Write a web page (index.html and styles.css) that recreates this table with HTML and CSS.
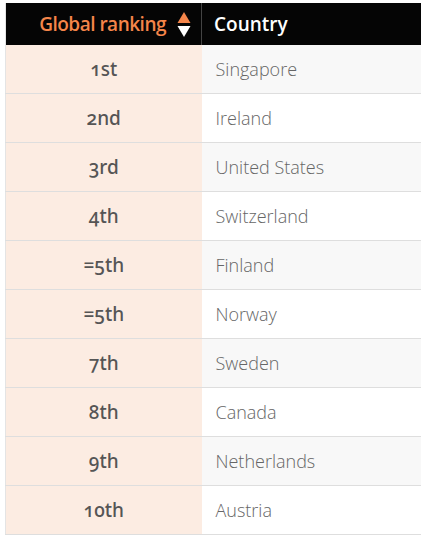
FILE: index.html
```html
<!DOCTYPE html>
<html>
<head>
<meta charset="utf-8">
<link rel="stylesheet" href="styles.css">
</head>
<body>
<div class="wrap">
<table class="rank">
  <thead>
    <tr>
      <th class="c1"><span class="hlabel">Global ranking</span><span class="sort"><svg width="14" height="27" viewBox="0 0 14 27"><path d="M7 1 L13.5 12 L0.5 12 Z" fill="#f5854a"/><path d="M0.5 15 L13.5 15 L7 26 Z" fill="#ffffff"/></svg></span></th>
      <th class="c2">Country</th>
    </tr>
  </thead>
  <tbody>
    <tr><td class="c1"><span class="num">1st</span></td><td class="c2">Singapore</td></tr>
    <tr><td class="c1"><span class="num">2nd</span></td><td class="c2">Ireland</td></tr>
    <tr><td class="c1"><span class="num">3rd</span></td><td class="c2">United States</td></tr>
    <tr><td class="c1"><span class="num">4th</span></td><td class="c2">Switzerland</td></tr>
    <tr><td class="c1"><span class="num">=5th</span></td><td class="c2">Finland</td></tr>
    <tr><td class="c1"><span class="num">=5th</span></td><td class="c2">Norway</td></tr>
    <tr><td class="c1"><span class="num">7th</span></td><td class="c2">Sweden</td></tr>
    <tr><td class="c1"><span class="num">8th</span></td><td class="c2">Canada</td></tr>
    <tr><td class="c1"><span class="num">9th</span></td><td class="c2">Netherlands</td></tr>
    <tr><td class="c1"><span class="num">10th</span></td><td class="c2">Austria</td></tr>
  </tbody>
</table>
</div>
</body>
</html>
```
FILE: styles.css
```css
html, body {
  margin: 0;
  padding: 0;
  background: #ffffff;
}
.wrap {
  padding: 3px 0 0 5px;
  overflow: hidden;
  width: 416px;
}
.rank {
  border-collapse: collapse;
  width: 430px;
  table-layout: fixed;
  font-family: "Open Sans", sans-serif;
  font-size: 18px;
  color: #666666;
}
.rank th {
  background: #050505;
  height: 42px;
  padding: 0;
  font-weight: 600;
  text-align: left;
  vertical-align: middle;
}
.rank th.c1 {
  width: 196px;
  border-left: 1px solid #e4e4e4;
  border-right: 1px solid #444444;
  text-align: right;
  padding-right: 10px;
  box-sizing: border-box;
}
.rank th.c2 {
  color: #ffffff;
  padding-left: 12px;
  font-size: 19px;
}
.hlabel {
  color: #f5854a;
  vertical-align: middle;
  font-size: 19px;
  letter-spacing: -0.5px;
}
.sort {
  display: inline-block;
  vertical-align: middle;
  margin-left: 11px;
  height: 27px;
}
.sort svg { display: block; }
.rank td {
  height: 48px;
  padding: 0;
  border-bottom: 1px solid #dedede;
  vertical-align: middle;
}
.rank td.c1 {
  background: #fcece2;
  border-left: 1px solid #e4e4e4;
  text-align: center;
  color: #555555;
}
.num {
  font-family: "Noto Sans", sans-serif;
  font-weight: 500;
  font-variant-numeric: oldstyle-nums;
  font-size: 19px;
}
.rank td.c2 {
  padding-left: 14px;
  font-weight: 300;
  color: #666666;
}
.rank tbody tr:nth-child(odd) td.c2 {
  background: #f8f8f8;
}
```
